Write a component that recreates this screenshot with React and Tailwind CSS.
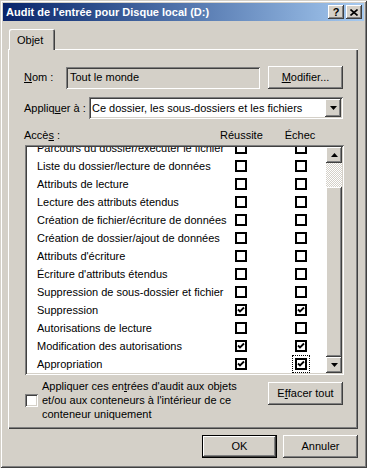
import React from 'react';

const raised = 'shadow-[inset_-1px_-1px_#404040,inset_1px_1px_#fff,inset_-2px_-2px_#808080,inset_2px_2px_#d4d0c8]';
const sunken = 'shadow-[inset_1px_1px_#808080,inset_-1px_-1px_#fff,inset_2px_2px_#404040,inset_-2px_-2px_#d4d0c8]';

const rows = [
    ['Parcours du dossier/exécuter le fichier', false, false],
    ['Liste du dossier/lecture de données', false, false],
    ['Attributs de lecture', false, false],
    ['Lecture des attributs étendus', false, false],
    ['Création de fichier/écriture de données', false, false],
    ['Création de dossier/ajout de données', false, false],
    ["Attributs d'écriture", false, false],
    ["Écriture d'attributs étendus", false, false],
    ['Suppression de sous-dossier et fichier', false, false],
    ['Suppression', true, true],
    ['Autorisations de lecture', false, false],
    ['Modification des autorisations', true, true],
    ['Appropriation', true, true],
];

const Arrow = ({ up }) => (
    <svg width="7" height="4" viewBox="0 0 7 4">
        <path d={up ? 'M3.5 0 L7 4 L0 4 Z' : 'M0 0 L7 0 L3.5 4 Z'} fill="black" />
    </svg>
);

const FlatBox = ({ checked, focus }) => (
    <span className="relative w-[12px] h-[12px] border-2 border-black bg-white flex items-center justify-center shrink-0">
        {checked && (
            <svg width="8" height="8" viewBox="0 0 8 8">
                <path d="M1 3.5 L3 5.5 L7 1.5" stroke="black" strokeWidth="1.8" fill="none" />
            </svg>
        )}
        {focus && <span className="absolute -inset-[5px] border border-dotted border-black" />}
    </span>
);

const Button = ({ children, className = '' }) => (
    <div className={`h-[23px] w-[75px] flex items-center justify-center bg-[#d4d0c8] ${raised} ${className}`}>
        {children}
    </div>
);

export default function App() {
    return (
        <div className="w-[367px] h-[468px] bg-[#d4d0c8] p-[3px] flex flex-col text-[11px] leading-[13px] text-black font-['Liberation_Sans',Arial,sans-serif] shadow-[inset_1px_1px_#d4d0c8,inset_-1px_-1px_#404040,inset_2px_2px_#fff,inset_-2px_-2px_#808080]">
            {/* Title bar */}
            <div className="h-[18px] flex items-center bg-gradient-to-r from-[#0a246a] to-[#a6caf0] pl-[3px] pr-[2px]">
                <span className="flex-1 text-white font-bold text-[11px]">Audit de l'entrée pour Disque local (D:)</span>
                <div className={`w-[16px] h-[14px] flex items-center justify-center font-bold text-[11px] ${raised} bg-[#d4d0c8]`}>?</div>
                <div className={`ml-[2px] w-[16px] h-[14px] flex items-center justify-center ${raised} bg-[#d4d0c8]`}>
                    <svg width="8" height="7" viewBox="0 0 8 7">
                        <path d="M0.5 0.5 L7.5 6.5 M7.5 0.5 L0.5 6.5" stroke="black" strokeWidth="1.6" />
                    </svg>
                </div>
            </div>

            <div className="flex-1 flex flex-col pl-[5px] pr-[6px] pt-[8px]">
                {/* Tab */}
                <div className="flex pl-[1px]">
                    <div className="relative z-10 h-[21px] w-[46px] -mb-[1px] bg-[#d4d0c8] rounded-t-[2px] pl-[8px] pt-[5px] shadow-[inset_1px_1px_#fff,inset_-1px_0_#404040,inset_-2px_0_#808080]">
                        Objet
                    </div>
                </div>

                {/* Panel */}
                <div className="h-[380px] flex flex-col pl-[16px] pt-[17px] shadow-[inset_1px_1px_#fff,inset_-1px_-1px_#404040,inset_-2px_-2px_#808080]">
                    <div className="flex items-center h-[23px]">
                        <span className="w-[42px]"><u>N</u>om :</span>
                        <div className={`w-[194px] h-[22px] flex items-center pl-[4px] ${sunken}`}>Tout le monde</div>
                        <Button className="ml-[8px]"><u>M</u>odifier...</Button>
                    </div>

                    <div className="flex items-center h-[22px] mt-[8px]">
                        <span className="w-[65px]">Appliq<u>u</u>er à :</span>
                        <div className={`w-[254px] h-[22px] flex items-center bg-white pl-[3px] pr-[2px] ${sunken}`}>
                            <span className="flex-1">Ce dossier, les sous-dossiers et les fichiers</span>
                            <div className={`w-[16px] h-[18px] flex items-center justify-center bg-[#d4d0c8] ${raised}`}>
                                <Arrow />
                            </div>
                        </div>
                    </div>

                    <div className="flex h-[13px] mt-[10px]">
                        <span className="w-[196px]">Accè<u>s</u> :</span>
                        <span className="w-[42px] text-center">Réussite</span>
                        <span className="w-[20px]" />
                        <span className="w-[36px] text-center">Échec</span>
                    </div>

                    {/* List */}
                    <div className={`ml-[1px] mt-[3px] w-[319px] h-[230px] bg-white p-[2px] flex ${sunken}`}>
                        <div className="flex-1 overflow-hidden">
                            <div className="-mt-[8px]">
                                {rows.map(([label, ok, fail], i) => (
                                    <div key={i} className="h-[18px] flex items-center pl-[10px]">
                                        <span className="w-[198px] whitespace-nowrap">{label}</span>
                                        <FlatBox checked={ok} />
                                        <span className="w-[48px]" />
                                        <FlatBox checked={fail} focus={i === rows.length - 1} />
                                    </div>
                                ))}
                            </div>
                        </div>
                        <div className="w-[16px] flex flex-col">
                            <div className={`h-[16px] flex items-center justify-center bg-[#d4d0c8] ${raised}`}>
                                <Arrow up />
                            </div>
                            <div className="h-[24px] bg-[repeating-conic-gradient(#fff_0_25%,#d4d0c8_0_50%)] bg-[length:2px_2px]" />
                            <div className={`flex-1 bg-[#d4d0c8] ${raised}`} />
                            <div className={`h-[16px] flex items-center justify-center bg-[#d4d0c8] ${raised}`}>
                                <Arrow />
                            </div>
                        </div>
                    </div>

                    {/* Bottom option */}
                    <div className="flex mt-[4px] ml-[1px]">
                        <div className="flex items-center">
                            <span className={`w-[13px] h-[13px] bg-white ${sunken}`} />
                        </div>
                        <div className="ml-[4px] w-[226px] leading-[14px]">
                            Appliquer ces en<u>t</u>rées d'audit aux objets<br />
                            et/ou aux conteneurs à l'intérieur de ce<br />
                            conteneur uniquement
                        </div>
                        <Button className="mt-[3px]">E<u>f</u>facer tout</Button>
                    </div>
                </div>

                {/* Dialog buttons */}
                <div className="flex justify-end mt-[6px]">
                    <Button className="border border-black">OK</Button>
                    <Button className="ml-[6px]">Annuler</Button>
                </div>
            </div>
        </div>
    );
}
